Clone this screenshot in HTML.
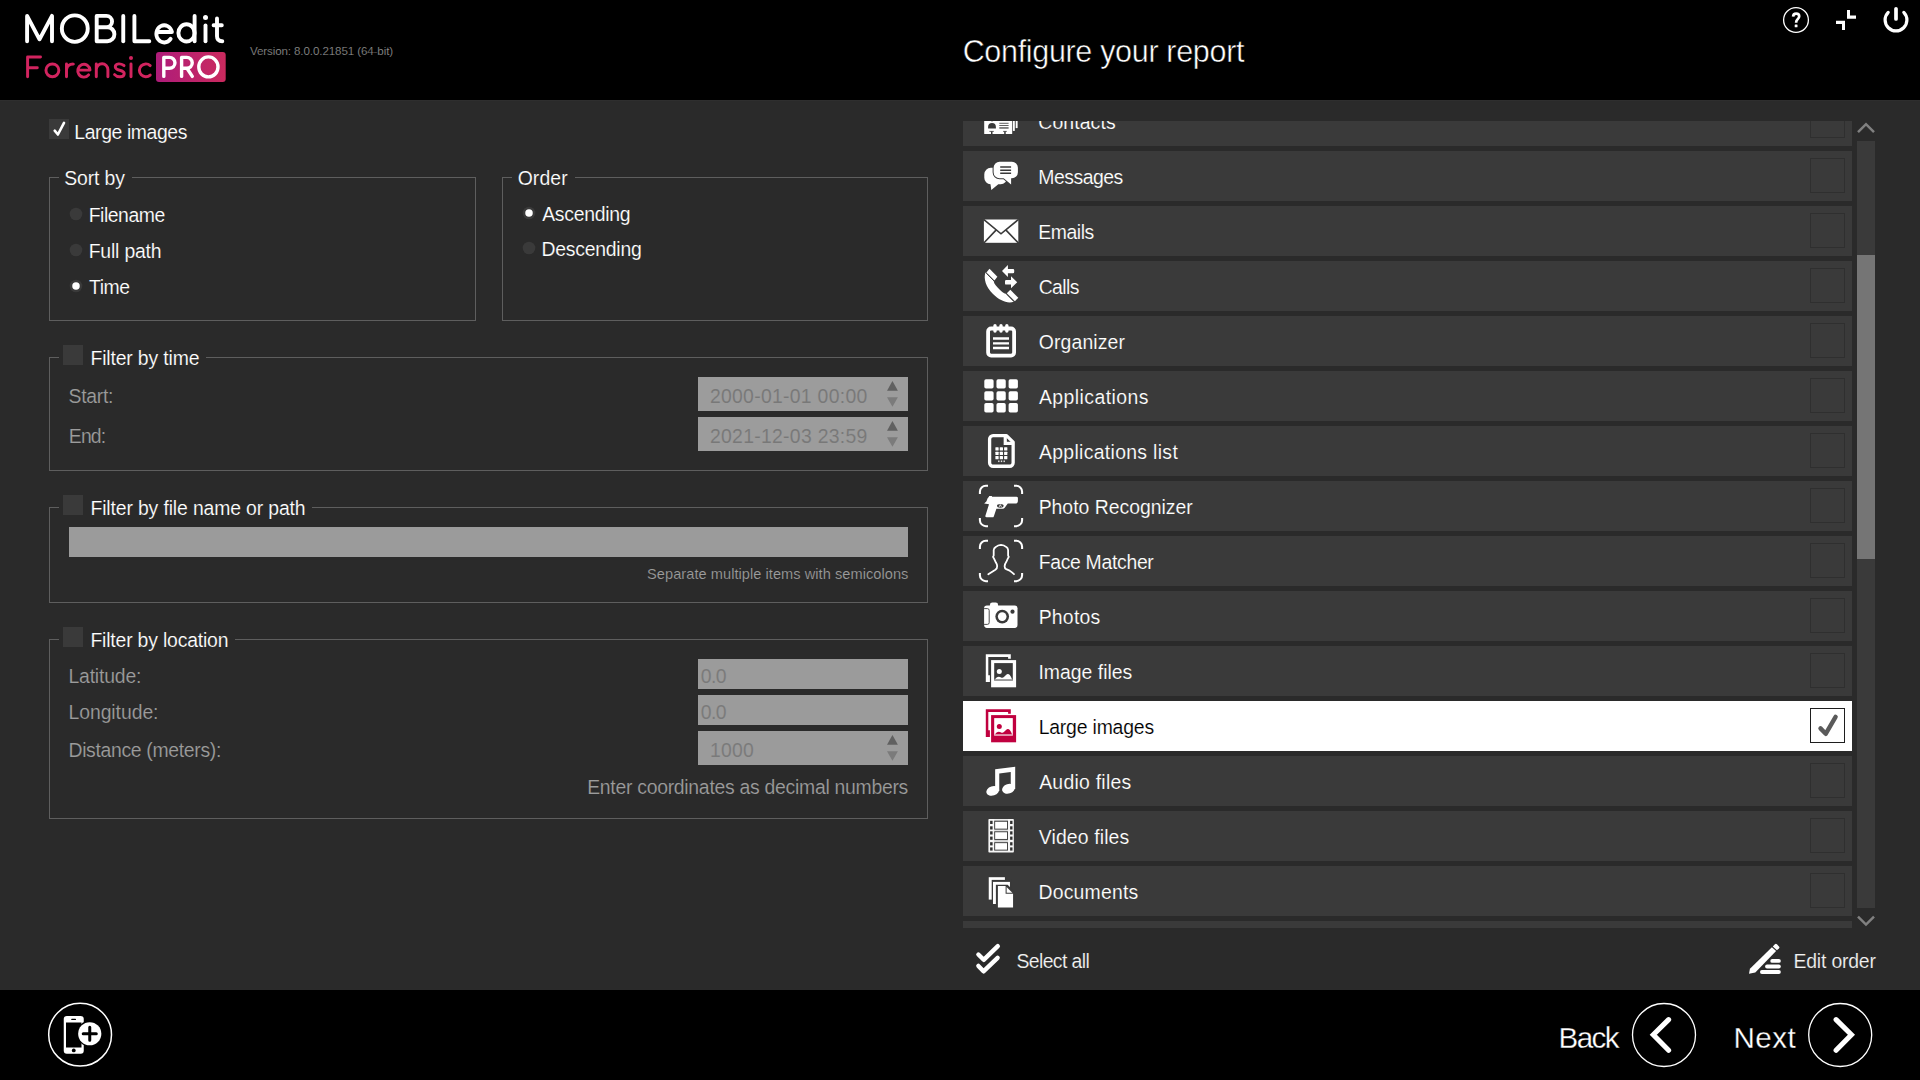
<!DOCTYPE html>
<html><head><meta charset="utf-8"><title>MOBILedit Forensic PRO - Configure your report</title>
<style>
html,body{margin:0;padding:0;}
body{width:1920px;height:1080px;overflow:hidden;background:#2a2a2a;font-family:"Liberation Sans",sans-serif;position:relative;}
div{position:absolute;box-sizing:border-box;}
.t{white-space:pre;}
.gb{border:1px solid #5e5e5e;}
.mask{background:#2a2a2a;}
.cb{background:#3a3a3a;width:20px;height:20px;}
.rad{width:13px;height:13px;border-radius:50%;background:#3a3a3a;}
.dot{width:7px;height:7px;border-radius:50%;background:#fff;left:3px;top:3px;}
.inp{background:#9c9c9c;}
.row{left:963px;width:889px;height:50px;background:#3a3a3a;}
.rcb{left:1810px;width:35px;height:35px;border:1px solid #2f2f2f;background:#3a3a3a;}
svg{position:absolute;left:0;top:0;}
</style></head><body>

<div style="left:0;top:0;width:1920px;height:100px;background:#000"></div>
<div style="left:0;top:100px;width:1920px;height:1px;background:#2e2e2e"></div>
<div style="left:0;top:990px;width:1920px;height:90px;background:#000"></div>
<div class="cb" style="left:49px;top:119px"></div>
<div class="gb" style="left:49px;top:177px;width:427px;height:144px"></div>
<div class="mask" style="left:59px;top:177px;width:73px;height:1px"></div>
<div class="gb" style="left:502px;top:177px;width:426px;height:144px"></div>
<div class="mask" style="left:512px;top:177px;width:63px;height:1px"></div>
<div class="gb" style="left:49px;top:357px;width:879px;height:114px"></div>
<div class="mask" style="left:59px;top:357px;width:147px;height:1px"></div>
<div class="gb" style="left:49px;top:507px;width:879px;height:96px"></div>
<div class="mask" style="left:59px;top:507px;width:253px;height:1px"></div>
<div class="gb" style="left:49px;top:639px;width:879px;height:180px"></div>
<div class="mask" style="left:59px;top:639px;width:176px;height:1px"></div>
<div class="cb" style="left:63px;top:345px"></div>
<div class="cb" style="left:63px;top:495px"></div>
<div class="cb" style="left:63px;top:627px"></div>
<div class="inp" style="left:698px;top:377px;width:210px;height:34px"></div>
<div class="inp" style="left:698px;top:417px;width:210px;height:34px"></div>
<div class="inp" style="left:69px;top:527px;width:839px;height:30px;background:#9b9b9b"></div>
<div class="inp" style="left:698px;top:659px;width:210px;height:30px;background:#9b9b9b"></div>
<div class="inp" style="left:698px;top:695px;width:210px;height:30px;background:#9b9b9b"></div>
<div class="inp" style="left:698px;top:731px;width:210px;height:34px;background:#9b9b9b"></div>
<div style="left:963px;top:121px;width:889px;height:807px;overflow:hidden">
<div class="row" style="left:0;top:-25px;">
<div class="rcb" style="left:847px;top:7px"></div>
</div>
<div class="row" style="left:0;top:30px;">
<div class="rcb" style="left:847px;top:7px"></div>
</div>
<div class="row" style="left:0;top:85px;">
<div class="rcb" style="left:847px;top:7px"></div>
</div>
<div class="row" style="left:0;top:140px;">
<div class="rcb" style="left:847px;top:7px"></div>
</div>
<div class="row" style="left:0;top:195px;">
<div class="rcb" style="left:847px;top:7px"></div>
</div>
<div class="row" style="left:0;top:250px;">
<div class="rcb" style="left:847px;top:7px"></div>
</div>
<div class="row" style="left:0;top:305px;">
<div class="rcb" style="left:847px;top:7px"></div>
</div>
<div class="row" style="left:0;top:360px;">
<div class="rcb" style="left:847px;top:7px"></div>
</div>
<div class="row" style="left:0;top:415px;">
<div class="rcb" style="left:847px;top:7px"></div>
</div>
<div class="row" style="left:0;top:470px;">
<div class="rcb" style="left:847px;top:7px"></div>
</div>
<div class="row" style="left:0;top:525px;">
<div class="rcb" style="left:847px;top:7px"></div>
</div>
<div class="row" style="left:0;top:580px;background:#fff">
<div class="rcb" style="left:847px;top:7px;background:#fff;border-color:#1e1e1e"></div>
</div>
<div class="row" style="left:0;top:635px;">
<div class="rcb" style="left:847px;top:7px"></div>
</div>
<div class="row" style="left:0;top:690px;">
<div class="rcb" style="left:847px;top:7px"></div>
</div>
<div class="row" style="left:0;top:745px;">
<div class="rcb" style="left:847px;top:7px"></div>
</div>
<div class="row" style="left:0;top:800px;">
<div class="rcb" style="left:847px;top:7px"></div>
</div>
</div>
<div style="left:963px;top:121px;width:889px;height:807px;overflow:hidden"><div style="left:-963px;top:-121px;width:1920px;height:1080px">
<div class="t" style="left:1038.31px;top:113px;font-size:19.4px;line-height:19.4px;letter-spacing:0.113px;color:#fff;-webkit-text-stroke:0.15px #3a3a3a">Contacts</div>
<div class="t" style="left:1038.27px;top:168px;font-size:19.4px;line-height:19.4px;letter-spacing:-0.481px;color:#fff;-webkit-text-stroke:0.15px #3a3a3a">Messages</div>
<div class="t" style="left:1038.27px;top:223px;font-size:19.4px;line-height:19.4px;letter-spacing:-0.435px;color:#fff;-webkit-text-stroke:0.15px #3a3a3a">Emails</div>
<div class="t" style="left:1038.71px;top:278px;font-size:19.4px;line-height:19.4px;letter-spacing:-0.603px;color:#fff;-webkit-text-stroke:0.15px #3a3a3a">Calls</div>
<div class="t" style="left:1038.72px;top:333px;font-size:19.4px;line-height:19.4px;letter-spacing:0.138px;color:#fff;-webkit-text-stroke:0.15px #3a3a3a">Organizer</div>
<div class="t" style="left:1038.95px;top:388px;font-size:19.4px;line-height:19.4px;letter-spacing:0.450px;color:#fff;-webkit-text-stroke:0.15px #3a3a3a">Applications</div>
<div class="t" style="left:1038.95px;top:443px;font-size:19.4px;line-height:19.4px;letter-spacing:0.324px;color:#fff;-webkit-text-stroke:0.15px #3a3a3a">Applications list</div>
<div class="t" style="left:1038.67px;top:498px;font-size:19.4px;line-height:19.4px;letter-spacing:-0.003px;color:#fff;-webkit-text-stroke:0.15px #3a3a3a">Photo Recognizer</div>
<div class="t" style="left:1038.67px;top:553px;font-size:19.4px;line-height:19.4px;letter-spacing:-0.308px;color:#fff;-webkit-text-stroke:0.15px #3a3a3a">Face Matcher</div>
<div class="t" style="left:1038.67px;top:608px;font-size:19.4px;line-height:19.4px;letter-spacing:0.247px;color:#fff;-webkit-text-stroke:0.15px #3a3a3a">Photos</div>
<div class="t" style="left:1038.48px;top:663px;font-size:19.4px;line-height:19.4px;letter-spacing:-0.001px;color:#fff;-webkit-text-stroke:0.15px #3a3a3a">Image files</div>
<div class="t" style="left:1038.67px;top:718px;font-size:19.4px;line-height:19.4px;letter-spacing:-0.188px;color:#000;-webkit-text-stroke:0.15px #fff">Large images</div>
<div class="t" style="left:1039.15px;top:773px;font-size:19.4px;line-height:19.4px;letter-spacing:0.265px;color:#fff;-webkit-text-stroke:0.15px #3a3a3a">Audio files</div>
<div class="t" style="left:1038.81px;top:828px;font-size:19.4px;line-height:19.4px;letter-spacing:0.128px;color:#fff;-webkit-text-stroke:0.15px #3a3a3a">Video files</div>
<div class="t" style="left:1038.47px;top:883px;font-size:19.4px;line-height:19.4px;letter-spacing:0.216px;color:#fff;-webkit-text-stroke:0.15px #3a3a3a">Documents</div>
</div></div>
<div style="left:1857px;top:141px;width:18px;height:767px;background:#3a3a3a"></div>
<div style="left:1857px;top:255px;width:18px;height:304px;background:#757575"></div>
<div class="t" style="left:962.67px;top:36px;font-size:30.5px;line-height:30.5px;letter-spacing:-0.321px;color:#ffffff;-webkit-text-stroke:0.5px #000">Configure your report</div>
<div class="t" style="left:249.92px;top:45px;font-size:11.6px;line-height:11.6px;letter-spacing:-0.110px;color:#8c8c8c;-webkit-text-stroke:0.15px #000">Version: 8.0.0.21851 (64-bit)</div>
<div class="t" style="left:74.37px;top:123px;font-size:19.4px;line-height:19.4px;letter-spacing:-0.406px;color:#ffffff;-webkit-text-stroke:0.15px #2a2a2a">Large images</div>
<div class="t" style="left:64.23px;top:169px;font-size:19.4px;line-height:19.4px;letter-spacing:-0.123px;color:#ffffff;-webkit-text-stroke:0.15px #2a2a2a">Sort by</div>
<div class="t" style="left:88.67px;top:206px;font-size:19.4px;line-height:19.4px;letter-spacing:-0.453px;color:#ffffff;-webkit-text-stroke:0.15px #2a2a2a">Filename</div>
<div class="t" style="left:88.67px;top:242px;font-size:19.4px;line-height:19.4px;letter-spacing:-0.176px;color:#ffffff;-webkit-text-stroke:0.15px #2a2a2a">Full path</div>
<div class="t" style="left:88.99px;top:278px;font-size:19.4px;line-height:19.4px;letter-spacing:-0.406px;color:#ffffff;-webkit-text-stroke:0.15px #2a2a2a">Time</div>
<div class="t" style="left:517.67px;top:169px;font-size:19.4px;line-height:19.4px;letter-spacing:0.104px;color:#ffffff;-webkit-text-stroke:0.15px #2a2a2a">Order</div>
<div class="t" style="left:542.15px;top:205px;font-size:19.4px;line-height:19.4px;letter-spacing:-0.271px;color:#ffffff;-webkit-text-stroke:0.15px #2a2a2a">Ascending</div>
<div class="t" style="left:541.57px;top:240px;font-size:19.4px;line-height:19.4px;letter-spacing:-0.247px;color:#ffffff;-webkit-text-stroke:0.15px #2a2a2a">Descending</div>
<div class="t" style="left:90.47px;top:349px;font-size:19.4px;line-height:19.4px;letter-spacing:-0.156px;color:#ffffff;-webkit-text-stroke:0.15px #2a2a2a">Filter by time</div>
<div class="t" style="left:68.53px;top:387px;font-size:19.4px;line-height:19.4px;letter-spacing:-0.290px;color:#9c9c9c;-webkit-text-stroke:0.15px #2a2a2a">Start:</div>
<div class="t" style="left:68.87px;top:427px;font-size:19.4px;line-height:19.4px;letter-spacing:-0.892px;color:#9c9c9c;-webkit-text-stroke:0.15px #2a2a2a">End:</div>
<div class="t" style="left:709.92px;top:387px;font-size:19.4px;line-height:19.4px;letter-spacing:0.284px;color:#787878;-webkit-text-stroke:0.15px #9d9d9d">2000-01-01 00:00</div>
<div class="t" style="left:709.92px;top:427px;font-size:19.4px;line-height:19.4px;letter-spacing:0.293px;color:#787878;-webkit-text-stroke:0.15px #9d9d9d">2021-12-03 23:59</div>
<div class="t" style="left:90.47px;top:499px;font-size:19.4px;line-height:19.4px;letter-spacing:-0.140px;color:#ffffff;-webkit-text-stroke:0.15px #2a2a2a">Filter by file name or path</div>
<div class="t" style="left:647.08px;top:567px;font-size:14.6px;line-height:14.6px;letter-spacing:0.045px;color:#9c9c9c;-webkit-text-stroke:0.15px #2a2a2a">Separate multiple items with semicolons</div>
<div class="t" style="left:90.47px;top:631px;font-size:19.4px;line-height:19.4px;letter-spacing:-0.189px;color:#ffffff;-webkit-text-stroke:0.15px #2a2a2a">Filter by location</div>
<div class="t" style="left:68.47px;top:667px;font-size:19.4px;line-height:19.4px;letter-spacing:-0.187px;color:#9c9c9c;-webkit-text-stroke:0.15px #2a2a2a">Latitude:</div>
<div class="t" style="left:68.47px;top:703px;font-size:19.4px;line-height:19.4px;letter-spacing:-0.061px;color:#9c9c9c;-webkit-text-stroke:0.15px #2a2a2a">Longitude:</div>
<div class="t" style="left:68.47px;top:741px;font-size:19.4px;line-height:19.4px;letter-spacing:-0.329px;color:#9c9c9c;-webkit-text-stroke:0.15px #2a2a2a">Distance (meters):</div>
<div class="t" style="left:700.80px;top:667px;font-size:19.4px;line-height:19.4px;letter-spacing:-0.611px;color:#7a7a7a;-webkit-text-stroke:0.15px #9a9a9a">0.0</div>
<div class="t" style="left:700.80px;top:703px;font-size:19.4px;line-height:19.4px;letter-spacing:-0.611px;color:#7a7a7a;-webkit-text-stroke:0.15px #9a9a9a">0.0</div>
<div class="t" style="left:709.95px;top:741px;font-size:19.4px;line-height:19.4px;letter-spacing:0.210px;color:#7a7a7a;-webkit-text-stroke:0.15px #9a9a9a">1000</div>
<div class="t" style="left:587.17px;top:778px;font-size:19.4px;line-height:19.4px;letter-spacing:-0.278px;color:#9c9c9c;-webkit-text-stroke:0.15px #2a2a2a">Enter coordinates as decimal numbers</div>
<div class="t" style="left:1016.43px;top:952px;font-size:19.4px;line-height:19.4px;letter-spacing:-0.594px;color:#f2f2f2;-webkit-text-stroke:0.15px #2a2a2a">Select all</div>
<div class="t" style="left:1793.47px;top:952px;font-size:19.4px;line-height:19.4px;letter-spacing:-0.178px;color:#f2f2f2;-webkit-text-stroke:0.15px #2a2a2a">Edit order</div>
<div class="t" style="left:1558.59px;top:1023px;font-size:29.6px;line-height:29.6px;letter-spacing:-1.604px;color:#ffffff;-webkit-text-stroke:0.3px #000">Back</div>
<div class="t" style="left:1733.39px;top:1023px;font-size:29.6px;line-height:29.6px;letter-spacing:0.492px;color:#ffffff;-webkit-text-stroke:0.3px #000">Next</div>
<svg width="1920" height="1080" viewBox="0 0 1920 1080">
<defs>
<linearGradient id="pro" x1="0" x2="1" y1="0" y2="0"><stop offset="0" stop-color="#ae1c7a"/><stop offset="1" stop-color="#ca2a5e"/></linearGradient>
<clipPath id="listclip"><rect x="963" y="121" width="889" height="807"/></clipPath>
</defs>
<!-- LOGO: MOBILedit -->
<g fill="none" stroke="#fff" stroke-width="3.9" stroke-linecap="round" stroke-linejoin="round">
<path d="M27.1 41.2V15.9L39.5 39.3L52 15.9V41.2"/>
<ellipse cx="74.8" cy="28.6" rx="12.95" ry="13.25"/>
<path d="M96.7 15.9V41.2M96.7 15.9H106.4A5.65 5.65 0 0 1 106.4 27.2H96.7M106.4 27.2H107.4A7 7 0 0 1 107.4 41.2H96.7"/>
<path d="M123.25 15.9V41.2"/>
<path d="M134.4 15.9V41.2H149.3"/>
<path d="M156.6 32H171.9A7.85 8.6 0 1 0 170.6 38.9"/>
<ellipse cx="186.5" cy="32.9" rx="8.1" ry="8.6"/>
<path d="M194.6 15.9V41.2"/>
<path d="M205.5 25.4V41.2"/>
<path d="M217 18.5V36.2Q217 41.2 222.3 41.2M213.6 25.2H221.8"/>
</g>
<circle cx="205.5" cy="17.5" r="2.5" fill="#fff"/>
<!-- Forensic -->
<g fill="none" stroke="#d2245f" stroke-width="2.95" stroke-linecap="round" stroke-linejoin="round">
<path d="M27.6 76.8V57H40.5M27.6 67.8H37.3"/>
<circle cx="52.4" cy="70.35" r="6.45"/>
<path d="M66.5 63.9V76.8M66.5 69.5Q67.5 64 73.4 64.1"/>
<path d="M77.8 70.1H90A6.1 6.45 0 1 0 88.6 74.8"/>
<path d="M96.3 63.9V76.8M96.3 69.6A5.8 5.8 0 0 1 107.9 69.6V76.8"/>
<path d="M124 65.6Q121 63.6 118.6 63.9Q115.2 64.3 115.3 67Q115.4 69.3 119.6 70.2Q124.3 71.2 124.2 73.8Q124 76.6 120 76.8Q116.6 76.9 114.6 74.6"/>
<path d="M131 63.9V76.8"/>
<path d="M150.2 65.6A6.45 6.45 0 1 0 150.2 75.1"/>
</g>
<circle cx="131" cy="57.9" r="2" fill="#d2245f"/>
<!-- PRO -->
<rect x="156" y="52" width="69.7" height="29.9" rx="3" fill="url(#pro)"/>
<g fill="none" stroke="#fff" stroke-width="3.4" stroke-linecap="round" stroke-linejoin="round">
<path d="M163.8 76.4V57.4H169.5A5.45 5.45 0 0 1 169.5 68.3H163.8"/>
<path d="M181.6 76.4V57.4H186.8A5.45 5.45 0 0 1 186.8 68.3H181.6M187 68.3L192.3 76.4"/>
<ellipse cx="208.4" cy="66.9" rx="9.6" ry="10"/>
</g>
<!-- header icons -->
<circle cx="1796" cy="20" r="12.4" fill="none" stroke="#fff" stroke-width="1.3"/>
<path d="M1793.1 16.6Q1793.2 13.6 1796.2 13.6Q1799.2 13.6 1799.2 16.3Q1799.2 17.9 1797.6 19.2Q1796.1 20.4 1796.1 22.7" fill="none" stroke="#fff" stroke-width="2.7"/>
<rect x="1794.7" y="24.5" width="2.8" height="2.7" rx=".5" fill="#fff"/>
<g fill="#fff">
<path d="M1847 10H1850V15.6H1856V18.8H1847Z"/>
<path d="M1836 20.8H1845V30H1842V24.1H1836Z"/>
</g>
<g fill="none" stroke="#fff" stroke-linecap="round">
<path d="M1888.2 12.4A10.9 10.9 0 1 0 1903.8 12.4" stroke-width="3.2"/>
<path d="M1896 8.8V19" stroke-width="3.7"/>
</g>
<!-- footer: add phone -->
<circle cx="80.1" cy="1034.7" r="31.4" fill="none" stroke="#fff" stroke-width="1.5"/>
<rect x="63.75" y="1016" width="20" height="37.75" rx="3" fill="#fff"/>
<rect x="66" y="1022.5" width="15.5" height="25" fill="#000"/>
<rect x="71.2" y="1018.8" width="4.8" height="1.2" rx="0.6" fill="#000"/>
<circle cx="73.75" cy="1050.4" r="1.9" fill="#000"/>
<circle cx="89.75" cy="1033.75" r="12.9" fill="#000"/>
<circle cx="89.75" cy="1033.75" r="11.6" fill="#fff"/>
<path d="M83.2 1033.75H96.3M89.75 1027.2V1040.3" stroke="#000" stroke-width="3" stroke-linecap="round" fill="none"/>
<!-- back / next -->
<g fill="none" stroke="#fff">
<circle cx="1664" cy="1035" r="31.5" stroke-width="1.3"/>
<circle cx="1840.2" cy="1035" r="31.5" stroke-width="1.3"/>
<path d="M1668.6 1019.6L1653.3 1034.8L1668.6 1050.2" stroke-width="5.1" stroke-linecap="round" stroke-linejoin="miter"/>
<path d="M1836.1 1019.6L1851.4 1034.8L1836.1 1050.2" stroke-width="5.1" stroke-linecap="round" stroke-linejoin="miter"/>
</g>
<!-- left panel: checkmark + spinners -->
<path d="M54.7 130.7L57.9 134.5L64 122.9" fill="none" stroke="#fff" stroke-width="2.6" stroke-linecap="round" stroke-linejoin="round"/>
<g>
<path d="M887 390.7L892.45 381.0L897.9 390.7Z" fill="#606060"/>
<path d="M887 397.2L892.45 406.7L897.9 397.2Z" fill="#7b7b7b"/>
<path d="M887 430.7L892.45 421.0L897.9 430.7Z" fill="#606060"/>
<path d="M887 437.2L892.45 446.7L897.9 437.2Z" fill="#7b7b7b"/>
<path d="M887 744.7L892.45 735L897.9 744.7Z" fill="#606060"/>
<path d="M887 751.2L892.45 760.7L897.9 751.2Z" fill="#7b7b7b"/>
</g>
<!-- scrollbar arrows -->
<g fill="none" stroke="#808080" stroke-width="2.5">
<path d="M1858 132.2L1866 124.2L1874 132.2"/>
<path d="M1858 916.6L1866 924.6L1874 916.6"/>
</g>
<!-- select all -->
<g fill="none" stroke="#fff" stroke-width="4.4" stroke-linecap="round" stroke-linejoin="round">
<path d="M978.4 954.5L983.7 959.8L997.8 946.2"/>
<path d="M978.4 965.9L983.5 971.3L997.6 957.8"/>
</g>
<!-- edit order -->
<g fill="#fff">
<path d="M1749 973.7L1749.95 968.8L1771.9 947.3L1776.1 951L1755.3 972.5Z"/>
<path d="M1772.8 946.4L1774.9 944.3Q1775.9 943.4 1776.9 944.3L1779 946.4Q1779.9 947.4 1779 948.3L1776.95 950.3Z"/>
<rect x="1770.3" y="959" width="10.5" height="3.8" rx="1.9"/>
<rect x="1765.1" y="964.6" width="15.7" height="3.8" rx="1.9"/>
<rect x="1760" y="970.1" width="20.8" height="3.8" rx="1.9"/>
</g>
<!-- checkbox check in selected row -->
<path d="M1820.5 728.4L1825.7 733.8L1835.6 716.9" fill="none" stroke="#5a5a5a" stroke-width="4.4" stroke-linecap="round" stroke-linejoin="round"/>
<g clip-path="url(#listclip)">
<!-- Contacts (row 96-146, clipped at 121) -->
<g>
<rect x="984.2" y="108" width="28" height="26" rx=".6" fill="#fff"/>
<rect x="1012.9" y="110" width="1.9" height="20.9" fill="#fff"/>
<rect x="1015.7" y="112" width="1.9" height="16.1" fill="#fff"/>
<path d="M988.1 128.6V127A3.9 3.9 0 0 1 995.9 127V128.6Z" fill="#3a3a3a"/>
<path d="M991.3 121L992 121.7L992.7 121Z" fill="#3a3a3a"/>
<path d="M999.3 123.3H1008.6M999.3 125.5H1008.6" stroke="#3a3a3a" stroke-width=".8" fill="none"/>
<rect x="999.3" y="127" width="9.3" height="1.85" fill="#808080"/>
<path d="M989.4 131.4H993.8M1003.1 131.4H1006.8" stroke="#3a3a3a" stroke-width=".8" fill="none"/>
<rect x="991" y="131.4" width="1.5" height="2.7" fill="#3a3a3a"/><rect x="1004.2" y="131.4" width="1.5" height="2.7" fill="#3a3a3a"/>
</g>
<!-- Messages -->
<g>
<path d="M990.8 167.8H1000.7A6.5 6.5 0 0 1 1007.2 174.3V177.7A6.5 6.5 0 0 1 1000.7 184.2H998.3L991.3 190L990.5 184.2A6.5 6.5 0 0 1 984.3 177.7V174.3A6.5 6.5 0 0 1 990.8 167.8Z" fill="#fff"/>
<path d="M999.6 161.8H1011.9A6 6 0 0 1 1017.9 167.8V172.3A6 6 0 0 1 1011.9 178.3H1011.1V184.4L1003.7 178.3H999.6A6 6 0 0 1 993.6 172.3V167.8A6 6 0 0 1 999.6 161.8Z" fill="#fff" stroke="#3a3a3a" stroke-width="2" paint-order="stroke"/>
<path d="M1000.2 166.9H1011.1M1000.2 170.15H1011.1M1000.2 173.35H1011.1" stroke="#3a3a3a" stroke-width="1.5" fill="none"/>
</g>
<!-- Emails -->
<g>
<rect x="983.9" y="219.5" width="34.4" height="23.3" fill="#fff"/>
<path d="M983.6 219.4L1001 233.8L1018.6 219.4M983.6 243.2L996 230.1M1018.6 243.2L1006 230.1" stroke="#3a3a3a" stroke-width="1.6" fill="none"/>
</g>
<!-- Calls -->
<g fill="#fff">
<path d="M985.4 272.4C983.4 278.5 985.8 286.8 993 294C999.6 300.6 1008 304.2 1014 301.5L1006.4 293.9C1004.4 293.9 1001.6 291.6 999.3 289.2C996.8 286.6 994 284.2 993.6 280.8Z"/>
<path d="M986.4 272.4L989.5 268.8L997.4 276.8L994.4 280.6Z"/>
<path d="M1006.8 293.3L1010.3 289.7L1018.3 297.8L1014.9 301.3Z"/>
<path d="M1002 271L1007.9 265.1V268.9H1013A1.2 1.2 0 0 1 1014.2 270.1V272A1.2 1.2 0 0 1 1013 273.2H1007.9V277Z"/>
<path d="M1017.2 282.3L1011 276.2V280.1H1006.2A1.2 1.2 0 0 0 1005 281.3V283.4A1.2 1.2 0 0 0 1006.2 284.6H1011V288.3Z"/>
</g>
<path d="M986.6 273.4L994.1 281M1006.6 294.2L1014 301.7" stroke="#3a3a3a" stroke-width="1" fill="none"/>
<!-- Organizer -->
<g>
<rect x="988.1" y="328.5" width="26" height="27.1" rx="3" fill="none" stroke="#fff" stroke-width="3.8"/>
<path d="M995 325.8V331M1001 325.8V331M1006.85 325.8V331" stroke="#fff" stroke-width="3.4" stroke-linecap="round" fill="none"/>
<path d="M993 338.45H1009M993 343.35H1009M993 348H1009" stroke="#fff" stroke-width="2.4" fill="none"/>
</g>
<!-- Applications -->
<g fill="#fff">
<rect x="984.3" y="379.2" width="9.3" height="9.3" rx="1.7"/><rect x="996.45" y="379.2" width="9.3" height="9.3" rx="1.7"/><rect x="1008.6" y="379.2" width="9.3" height="9.3" rx="1.7"/>
<rect x="984.3" y="391.2" width="9.3" height="9.3" rx="1.7"/><rect x="996.45" y="391.2" width="9.3" height="9.3" rx="1.7"/><rect x="1008.6" y="391.2" width="9.3" height="9.3" rx="1.7"/>
<rect x="984.3" y="403.1" width="9.3" height="9.3" rx="1.7"/><rect x="996.45" y="403.1" width="9.3" height="9.3" rx="1.7"/><rect x="1008.6" y="403.1" width="9.3" height="9.3" rx="1.7"/>
</g>
<!-- Applications list -->
<g>
<path d="M1006.5 435.55H993.1A3.5 3.5 0 0 0 989.6 439.05V462.75A3.5 3.5 0 0 0 993.1 466.25H1009.65A3.5 3.5 0 0 0 1013.15 462.75V442.2Z" fill="none" stroke="#fff" stroke-width="3.3" stroke-linejoin="round"/>
<path d="M1005.25 435.55V443.35H1013.15" fill="none" stroke="#fff" stroke-width="3.2"/>
<g fill="#fff"><rect x="995.4" y="447.3" width="3.25" height="3.2" rx=".5"/><rect x="999.75" y="447.3" width="3.25" height="3.2" rx=".5"/><rect x="1004.1" y="447.3" width="3.25" height="3.2" rx=".5"/><rect x="995.4" y="451.75" width="3.25" height="3.2" rx=".5"/><rect x="999.75" y="451.75" width="3.25" height="3.2" rx=".5"/><rect x="1004.1" y="451.75" width="3.25" height="3.2" rx=".5"/><rect x="995.4" y="456.1" width="3.25" height="3.2" rx=".5"/><rect x="999.75" y="456.1" width="3.25" height="3.2" rx=".5"/><rect x="1004.1" y="456.1" width="3.25" height="3.2" rx=".5"/><rect x="998.1" y="460.5" width="1.4" height="1.6" opacity=".85"/><rect x="1000.8" y="460.5" width="1.4" height="1.6" opacity=".85"/><rect x="1003.5" y="460.5" width="1.4" height="1.6" opacity=".85"/></g>
</g>
<!-- Photo Recognizer -->
<g>
<g fill="none" stroke="#fff" stroke-width="2.05">
<path d="M979.9 494V491.65A6 6 0 0 1 985.9 485.65H988"/>
<path d="M1014 485.65H1016.1A6 6 0 0 1 1022.1 491.65V494"/>
<path d="M979.9 518V520.15A6 6 0 0 0 985.9 526.15H988"/>
<path d="M1014 526.15H1016.1A6 6 0 0 0 1022.1 520.15V518"/>
</g>
<path d="M988.9 496.7L989.2 496.1H991.8L992.1 496.7H1016.4Q1017.9 496.7 1017.9 498.1V501.2Q1017.9 503.6 1015 503.6H1007.8L1004.7 507.7Q1004 508.7 1002.8 508.7H996.4L993.8 516.4Q993.5 517.3 992.4 517.3H986.7Q985 517.3 985.4 515.8L989 504.3L984.2 503.6L986.5 501.2L987.5 498.4Z" fill="#fff"/>
<ellipse cx="1000.3" cy="505.8" rx="3.3" ry="1.85" fill="#3a3a3a"/>
<path d="M999.2 506.9L1000.3 504.6L1001.4 506.9" stroke="#fff" stroke-width=".8" fill="none"/>
</g>
<!-- Face Matcher -->
<g>
<g fill="none" stroke="#fff" stroke-width="2.05" transform="translate(0 55)">
<path d="M979.9 494V491.65A6 6 0 0 1 985.9 485.65H988"/>
<path d="M1014 485.65H1016.1A6 6 0 0 1 1022.1 491.65V494"/>
<path d="M979.9 518V520.15A6 6 0 0 0 985.9 526.15H988"/>
<path d="M1014 526.15H1016.1A6 6 0 0 0 1022.1 520.15V518"/>
</g>
<path d="M988.3 574.2L995.4 569.7Q997.3 568.4 997.2 566Q997.1 564.4 995.9 562.6L993.8 558.2L993 556.9L993.7 555.6V550Q993.9 548 995.6 547.1Q998 545 1001 544.9Q1004 545 1006.4 547.1Q1007.9 548 1008.1 550V555.6L1008.8 556.9L1008 558.2L1006.5 561.5Q1004.6 564.2 1004.6 566.2Q1004.6 568.3 1006.2 569.1L1009 570.3Q1011.8 572 1014 574.2" fill="none" stroke="#fff" stroke-width="1.8" stroke-linecap="round" stroke-linejoin="round"/>
</g>
<!-- Photos -->
<g>
<rect x="984.1" y="605.5" width="33.4" height="22.4" rx="2.8" fill="#fff"/>
<rect x="989.9" y="602.6" width="8.2" height="6" rx="2.4" fill="#fff"/>
<circle cx="1002.2" cy="616.6" r="6.85" fill="#3a3a3a"/>
<circle cx="1002.2" cy="616.6" r="4.3" fill="#fff"/>
<circle cx="1012.5" cy="611.7" r="2.1" fill="#3a3a3a"/>
<path d="M984.1 608.6H987.4A1.8 1.8 0 0 1 989.2 610.4V622.6A1.8 1.8 0 0 1 987.4 624.4H984.1" fill="none" stroke="#3a3a3a" stroke-width=".9"/>
</g>
<!-- Image files -->
<g>
<path d="M985.8 654.2H1010.8V658.7H1008.1V657H988.3V675.2H989.9V681.9H985.8Z" fill="#fff"/>
<rect x="991.1" y="660.1" width="25" height="27.2" fill="#fff"/>
</g>
<rect x="994.2" y="663.1" width="18.6" height="17.4" fill="#3a3a3a"/>
<rect x="994.2" y="679.2" width="18.6" height="1.3" fill="#9a9a9a"/>
<circle cx="999.3" cy="671.5" r="2.5" fill="#fff"/>
<path d="M995 679.3L996.6 677.6Q998.2 676.2 1000 676.9L1001.6 677.7Q1002.8 678.1 1003.9 677.1L1006 674.9Q1008 673.3 1009.8 675Q1011.2 676.7 1012 679.3Z" fill="#fff"/>
<!-- Large images (selected) -->
<g transform="translate(0 55)">
<path d="M985.8 654.2H1010.8V658.7H1008.1V657H988.3V675.2H989.9V681.9H985.8Z" fill="#c0003f"/>
<rect x="991.1" y="660.1" width="25" height="27.2" fill="#c0003f"/>
</g>
<rect x="994.2" y="718.1" width="18.6" height="17.4" fill="#fff"/>
<rect x="994.2" y="734.2" width="18.6" height="1.3" fill="#e9a9bd"/>
<circle cx="999.3" cy="726.5" r="2.5" fill="#c0003f"/>
<path d="M995 734.3L996.6 732.6Q998.2 731.2 1000 731.9L1001.6 732.7Q1002.8 733.1 1003.9 732.1L1006 729.9Q1008 728.3 1009.8 730Q1011.2 731.7 1012 734.3Z" fill="#c0003f"/>
<!-- Audio -->
<g fill="#fff">
<path d="M995.15 769.2L1015.2 766.8V789H1010.75V772.05L999.25 773.4V791H995.15Z"/>
<ellipse cx="992.75" cy="790.9" rx="6.6" ry="4.7" transform="rotate(-18 992.75 790.9)"/>
<ellipse cx="1008.5" cy="788.8" rx="6.6" ry="4.7" transform="rotate(-18 1008.5 788.8)"/>
</g>
<!-- Video -->
<g>
<rect x="988.4" y="818.9" width="25.45" height="33.6" rx=".8" fill="#f6f6f6"/>
<g fill="#c4c4c4"><rect x="994.2" y="819.8" width="13.8" height="1"/><rect x="994.2" y="829.6" width="13.8" height=".6"/><rect x="994.2" y="830.7" width="13.8" height=".6"/><rect x="994.2" y="839.9" width="13.8" height=".8"/><rect x="994.2" y="841.4" width="13.8" height=".8"/></g>
<g fill="#303030"><rect x="990.1" y="820.8" width="2.5" height="3.2"/><rect x="1010.1" y="820.8" width="2.4" height="3.2"/><rect x="990.1" y="826.3" width="2.5" height="3.2"/><rect x="1010.1" y="826.3" width="2.4" height="3.2"/><rect x="990.1" y="831.3" width="2.5" height="3.2"/><rect x="1010.1" y="831.3" width="2.4" height="3.2"/><rect x="990.1" y="836.6" width="2.5" height="3.2"/><rect x="1010.1" y="836.6" width="2.4" height="3.2"/><rect x="990.1" y="842.2" width="2.5" height="3.2"/><rect x="1010.1" y="842.2" width="2.4" height="3.2"/><rect x="990.1" y="847.4" width="2.5" height="3.2"/><rect x="1010.1" y="847.4" width="2.4" height="3.2"/></g>
<g fill="#3a3a3a"><rect x="994.2" y="820.8" width="13.8" height="8.8"/><rect x="994.2" y="831.3" width="13.8" height="8.6"/><rect x="994.2" y="842.2" width="13.8" height="8.4"/></g>
<g fill="#fff"><rect x="995.15" y="821.75" width="11.9" height="6.90"/><rect x="995.15" y="832.25" width="11.9" height="6.70"/><rect x="995.15" y="843.1500000000001" width="11.9" height="6.50"/></g>
</g>
<!-- Documents -->
<g>
<rect x="988.75" y="877.2" width="16.15" height="22.4" fill="#fff"/>
<rect x="991.7" y="879.9" width="20" height="26" fill="#3a3a3a"/>
<rect x="993" y="881.9" width="16.95" height="22.1" fill="#fff"/>
<path d="M995.9 884.8H1007.6L1014.6 891.8V909H995.9Z" fill="#3a3a3a"/>
<path d="M997.9 885.95H1005.6V893.7H1013.06V907.5H997.9Z" fill="#fff"/>
<path d="M1006.6 887.1V892.8H1012.3Z" fill="#fff"/>
</g>
</g>
<g><circle cx="76" cy="214" r="6.3" fill="#3a3a3a"/><circle cx="76" cy="250" r="6.3" fill="#3a3a3a"/><circle cx="76" cy="286" r="6.3" fill="#3a3a3a"/><circle cx="76" cy="286" r="3.75" fill="#fff"/><circle cx="529" cy="213" r="6.3" fill="#3a3a3a"/><circle cx="529" cy="213" r="3.75" fill="#fff"/><circle cx="529" cy="248" r="6.3" fill="#3a3a3a"/></g></svg>

</body></html>
